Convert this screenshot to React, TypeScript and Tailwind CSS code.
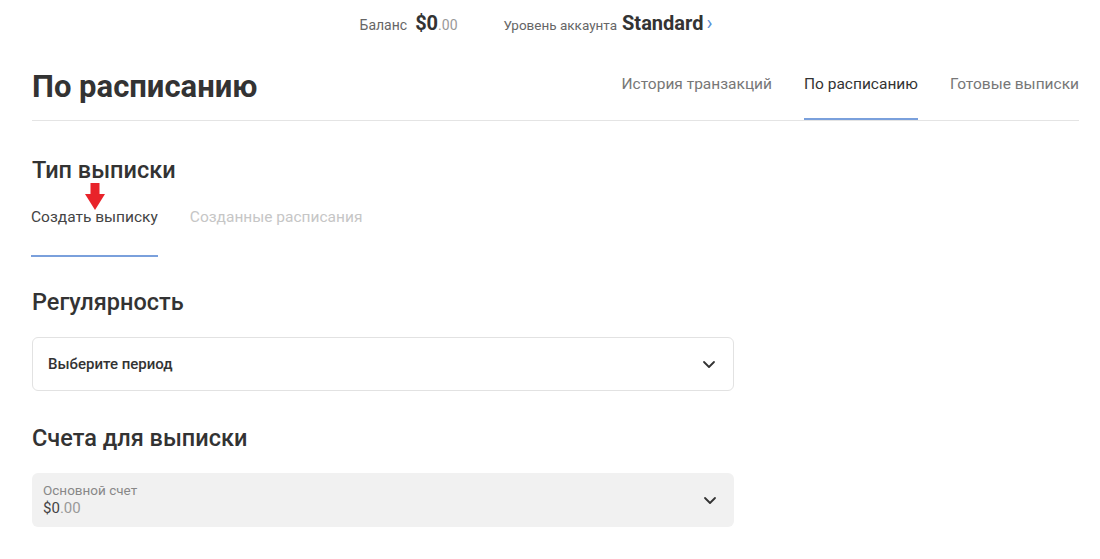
import React from "react";

function Chevron() {
  return (
    <svg width="16" height="16" viewBox="0 0 16 16" fill="none" className="text-[#333]">
      <path d="M3 6l5 5 5-5" stroke="currentColor" strokeWidth="1.8" strokeLinecap="round" strokeLinejoin="round" />
    </svg>
  );
}

export default function App() {
  return (
    <div className="w-[1100px] h-[559px] bg-white overflow-hidden font-['Roboto',_'Liberation_Sans',_sans-serif] text-[#333]">
      {/* top status bar */}
      <div className="flex justify-center items-center gap-[46px] h-[46px] pr-[28px]">
        <div className="flex items-baseline gap-2">
          <span className="text-[14px] text-[#666]">Баланс</span>
          <span className="text-[20px] font-bold text-[#333]">
            $0<span className="text-[14px] font-normal text-[#999]">.00</span>
          </span>
        </div>
        <div className="flex items-baseline gap-[5px]">
          <span className="text-[13.5px] text-[#666]">Уровень аккаунта</span>
          <span className="text-[20px] font-bold text-[#333]">Standard</span>
          <span className="text-[20px] text-[#5b8fd6] leading-none -ml-[2px]">›</span>
        </div>
      </div>

      <div className="pl-8 pr-[21px]">
        {/* header with nav */}
        <div className="flex items-end justify-between border-b border-[#e4e4e4] h-[75px]">
          <h1 className="text-[31px] font-bold text-[#333] leading-none pb-[18px]">По расписанию</h1>
          <nav className="flex gap-8 text-[15.5px] text-[#777]">
            <span className="pb-[24px]">История транзакций</span>
            <span className="pb-[22px] text-[#333] border-b-2 border-[#7aa0dc]">По расписанию</span>
            <span className="pb-[24px]">Готовые выписки</span>
          </nav>
        </div>

        {/* statement type */}
        <h2 className="text-[23.5px] font-medium text-[#333] mt-[38px] leading-none">Тип выписки</h2>
        <div className="relative flex gap-8 mt-[23px] text-[15.5px]">
          <span className="text-[#444] -ml-px pb-[26px] border-b-2 border-[#7aa0dc]">Создать выписку</span>
          <span className="text-[#c6c6c6]">Созданные расписания</span>
          <svg className="absolute left-[53px] -top-[23px]" width="20" height="28" viewBox="0 0 20 28">
            <path d="M5.5 0h9v11H20L10 27 0 11h5.5z" fill="#e8232a" />
          </svg>
        </div>

        {/* regularity */}
        <h2 className="text-[23.5px] font-medium text-[#333] mt-[34px] leading-none">Регулярность</h2>
        <div className="w-[702px] h-[54px] mt-[23px] border border-[#e2e2e2] rounded-md flex items-center justify-between pl-[15px] pr-4">
          <span className="text-[15px] font-medium text-[#333]">Выберите период</span>
          <Chevron />
        </div>

        {/* accounts */}
        <h2 className="text-[23.5px] font-medium text-[#333] mt-[36px] leading-none">Счета для выписки</h2>
        <div className="w-[702px] h-[54px] mt-[22px] bg-[#f1f1f1] rounded-md flex items-center justify-between pl-[11px] pr-4">
          <div className="flex flex-col leading-tight">
            <span className="text-[13.5px] text-[#888]">Основной счет</span>
            <span className="text-[15px] text-[#444]">
              $0<span className="text-[#999]">.00</span>
            </span>
          </div>
          <Chevron />
        </div>
      </div>
    </div>
  );
}
